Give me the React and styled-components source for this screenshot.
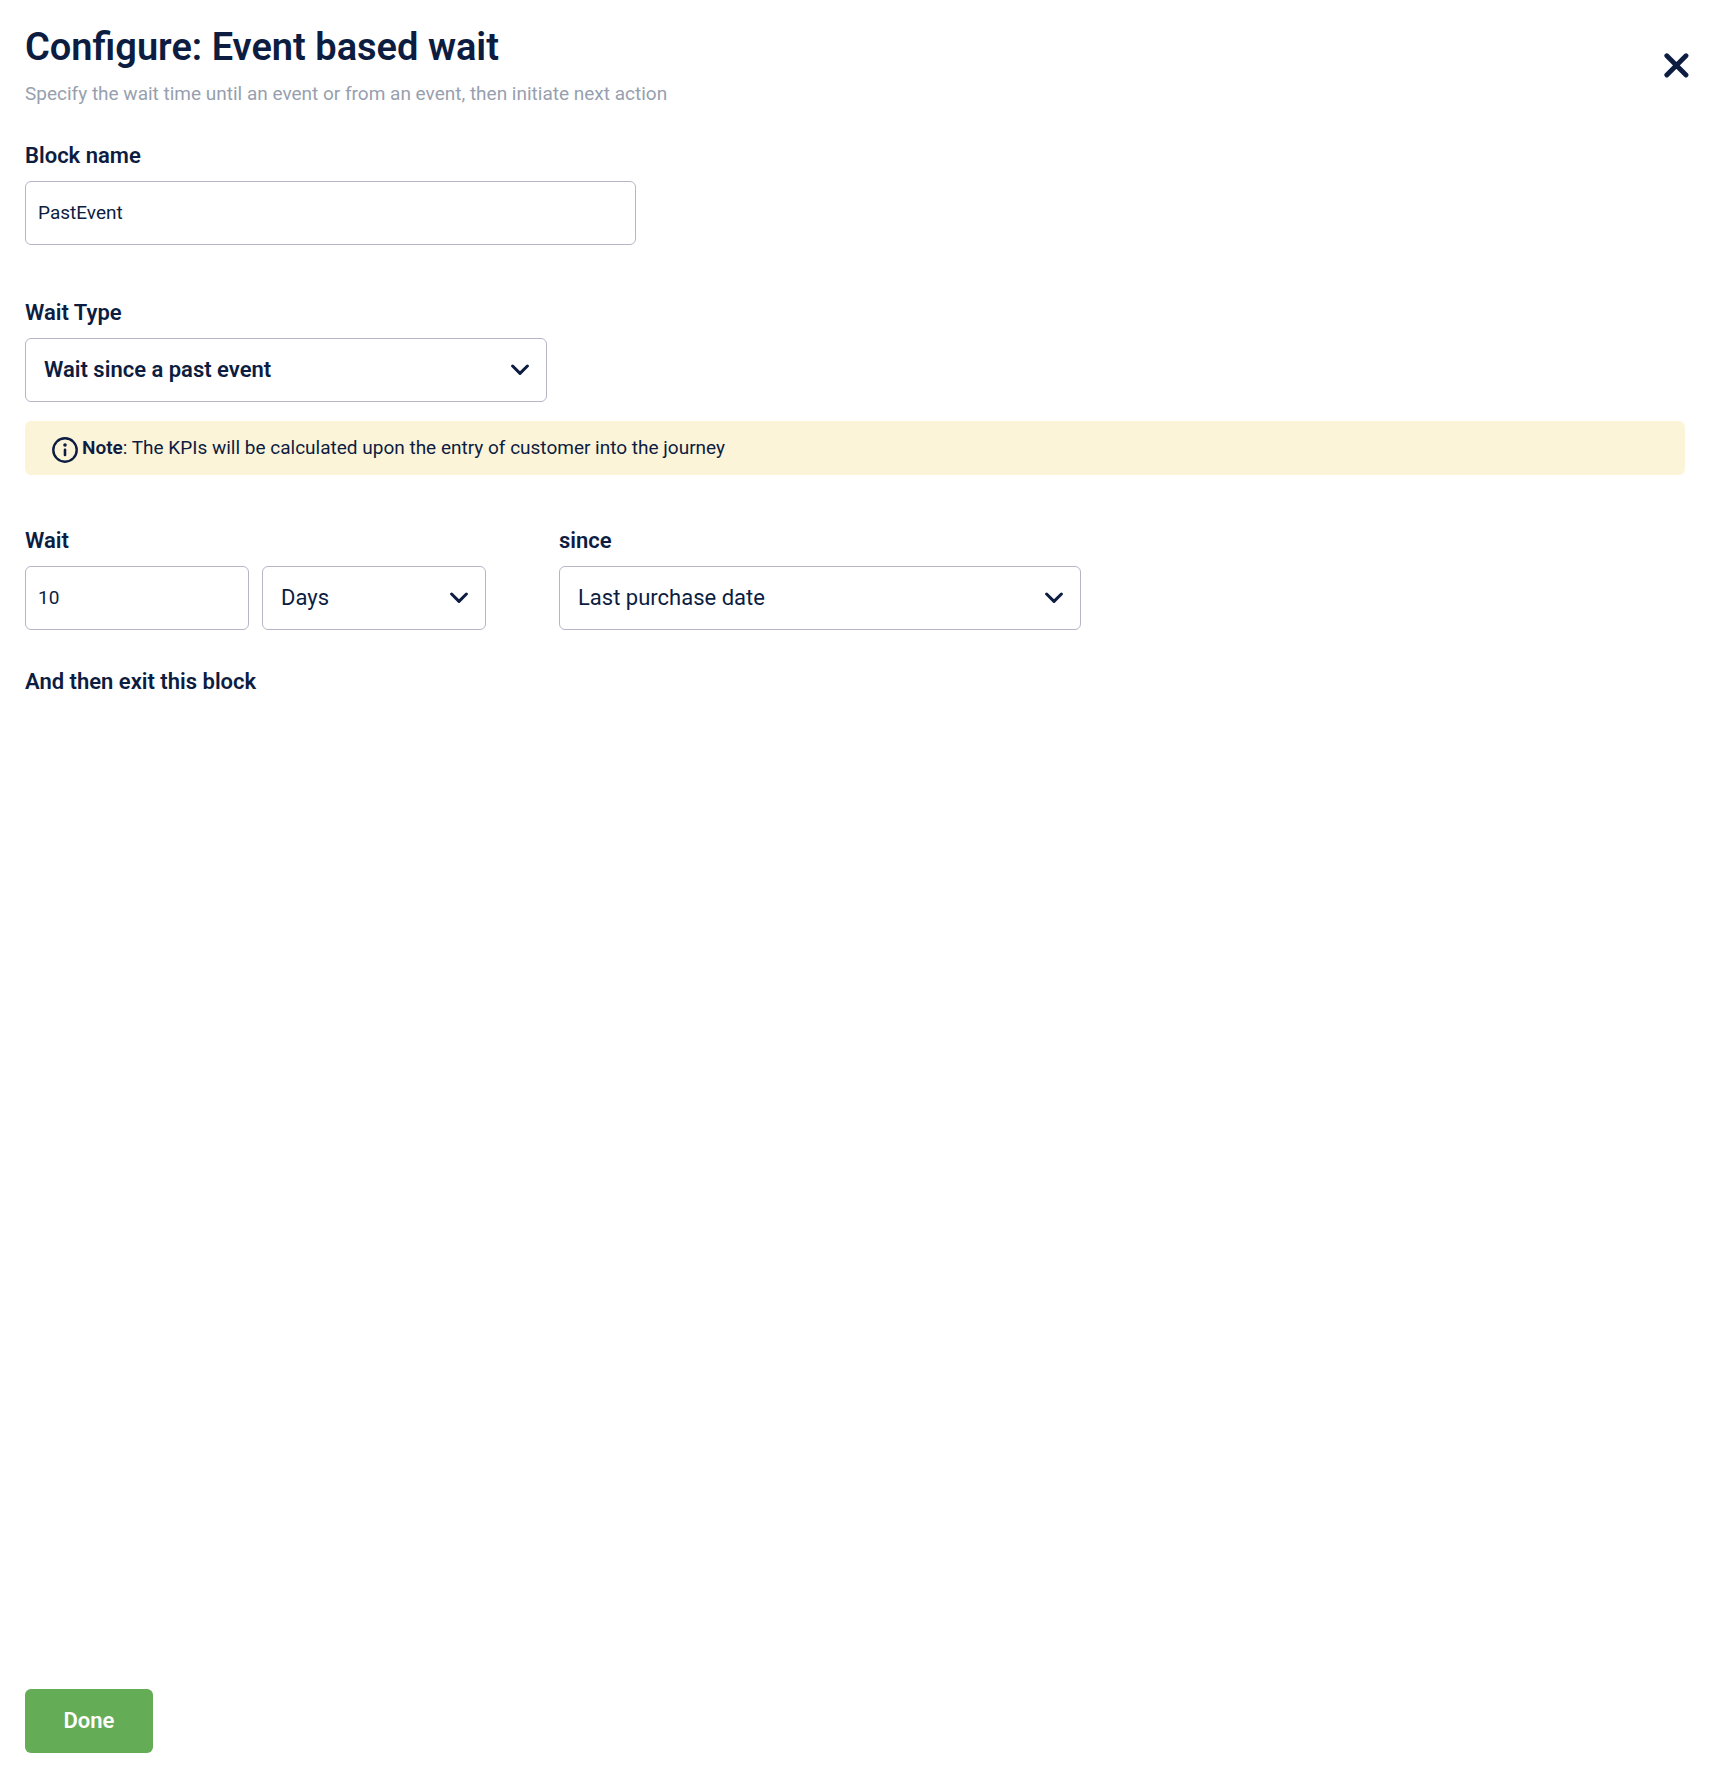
import React, { useState } from 'react';
import styled, { createGlobalStyle } from 'styled-components';


const App = () => {
    const [blockName, setBlockName] = useState('PastEvent');
    const [waitType, setWaitType] = useState('past');
    const [amount, setAmount] = useState('10');
    const [unit, setUnit] = useState('days');
    const [since, setSince] = useState('last-purchase');

    return (
        <>
            <GlobalStyle />
            <PageContainer>
                <Header>
                    <div>
                        <Title>Configure: Event based wait</Title>
                        <Subtitle>Specify the wait time until an event or from an event, then initiate next action</Subtitle>
                    </div>
                    <CloseButton type="button" aria-label="Close">
                        <svg width="25" height="25" viewBox="0 0 25 25" fill="none" stroke="currentColor" strokeWidth="4.8" strokeLinecap="round">
                            <path d="M2.8 2.8L22 22M22 2.8L2.8 22" />
                        </svg>
                    </CloseButton>
                </Header>

                <Field $width={611}>
                    <Label htmlFor="block-name">Block name</Label>
                    <TextInput id="block-name" value={blockName} onChange={(e) => setBlockName(e.target.value)} />
                </Field>

                <WaitTypeSection>
                    <Field $width={522}>
                        <Label htmlFor="wait-type">Wait Type</Label>
                        <Dropdown id="wait-type" $bold value={waitType} onChange={setWaitType}>
                            <option value="past">Wait since a past event</option>
                        </Dropdown>
                    </Field>
                    <Note>
                        <InfoIcon />
                        <span><strong>Note</strong>: The KPIs will be calculated upon the entry of customer into the journey</span>
                    </Note>
                </WaitTypeSection>

                <WaitRow>
                    <Field $width={461}>
                        <Label htmlFor="wait-amount">Wait</Label>
                        <InputPair>
                            <TextInput id="wait-amount" value={amount} onChange={(e) => setAmount(e.target.value)} />
                            <Dropdown aria-label="Unit" value={unit} onChange={setUnit}>
                                <option value="days">Days</option>
                            </Dropdown>
                        </InputPair>
                    </Field>
                    <Field $width={522}>
                        <Label htmlFor="since">since</Label>
                        <Dropdown id="since" value={since} onChange={setSince}>
                            <option value="last-purchase">Last purchase date</option>
                        </Dropdown>
                    </Field>
                </WaitRow>

                <ExitText>And then exit this block</ExitText>

                <Footer>
                    <DoneButton type="button">Done</DoneButton>
                </Footer>
            </PageContainer>
        </>
    );
};

const Dropdown = ({ onChange, children, ...rest }) => (
    <SelectWrapper>
        <Select onChange={(e) => onChange(e.target.value)} {...rest}>
            {children}
        </Select>
        <Chevron width="18" height="12" viewBox="0 0 18 12" aria-hidden="true">
            <path d="M1.6 2L9 9.4L16.4 2" fill="none" stroke="currentColor" strokeWidth="3" strokeLinecap="round" strokeLinejoin="round" />
        </Chevron>
    </SelectWrapper>
);

const InfoIcon = () => (
    <InfoSvg width="26" height="26" viewBox="0 0 26 26" aria-hidden="true">
        <circle cx="13" cy="13" r="11.7" fill="none" stroke="currentColor" strokeWidth="2.4" />
        <circle cx="13" cy="8" r="1.8" fill="currentColor" />
        <path d="M13 12.8V18" stroke="currentColor" strokeWidth="2.6" strokeLinecap="round" />
    </InfoSvg>
);

export default App;


const GlobalStyle = createGlobalStyle`
* {
    box-sizing: border-box;
}

body {
    margin: 0;
    background-color: #ffffff;
    color: #0c1d41;
    font-family: Roboto, sans-serif;
}

h1, p {
    margin: 0;
}

input, select, button {
    font-family: inherit;
    color: inherit;
}
`;

const PageContainer = styled.div`
display: flex;
flex-direction: column;
min-height: 100vh;
padding: 25px 37px 21px 25px;
`;

const Header = styled.header`
display: flex;
justify-content: space-between;
align-items: center;
margin-bottom: 37px;
`;

const Title = styled.h1`
font-size: 38px;
line-height: 44px;
font-weight: 600;
`;

const Subtitle = styled.p`
margin-top: 13px;
font-size: 19px;
line-height: 24px;
color: #979fae;
`;

const CloseButton = styled.button`
display: flex;
margin-right: -4px;
padding: 0;
border: none;
background: none;
cursor: pointer;
`;

const Field = styled.div`
display: flex;
flex-direction: column;
gap: 12px;
width: 100%;
max-width: ${(props) => props.$width}px;
`;

const Label = styled.label`
font-size: 22px;
line-height: 26px;
font-weight: 600;
`;

const TextInput = styled.input`
width: 100%;
height: 64px;
padding: 0 12px 2px;
border: 1px solid #b4b6c6;
border-radius: 6px;
background-color: #ffffff;
font-size: 19px;
`;

const SelectWrapper = styled.div`
position: relative;
width: 100%;
`;

const Select = styled.select`
display: block;
width: 100%;
height: 64px;
padding: 0 50px 2px 18px;
border: 1px solid #b4b6c6;
border-radius: 6px;
background-color: #ffffff;
appearance: none;
font-size: 22px;
font-weight: ${(props) => (props.$bold ? 600 : 400)};
`;

const Chevron = styled.svg`
position: absolute;
top: 26px;
right: 18px;
pointer-events: none;
`;

const WaitTypeSection = styled.section`
display: flex;
flex-direction: column;
gap: 19px;
margin-top: 55px;
`;

const Note = styled.div`
display: flex;
align-items: center;
gap: 4px;
min-height: 54px;
padding: 0 27px;
border-radius: 6px;
background-color: #fcf4d9;
font-size: 19px;
line-height: 24px;

strong {
    font-weight: 600;
}
`;

const InfoSvg = styled.svg`
flex-shrink: 0;
margin-top: 4px;
`;

const WaitRow = styled.div`
display: flex;
gap: 73px;
margin-top: 53px;
`;

const InputPair = styled.div`
display: grid;
grid-template-columns: 1fr 1fr;
gap: 13px;
`;

const ExitText = styled.p`
margin-top: 39px;
font-size: 22px;
line-height: 26px;
font-weight: 600;
`;

const Footer = styled.footer`
margin-top: auto;
`;

const DoneButton = styled.button`
min-width: 128px;
height: 64px;
padding: 0 32px 2px;
border: none;
border-radius: 6px;
background-color: #65ac57;
color: #ffffff;
font-size: 22px;
font-weight: 600;
cursor: pointer;
`;
